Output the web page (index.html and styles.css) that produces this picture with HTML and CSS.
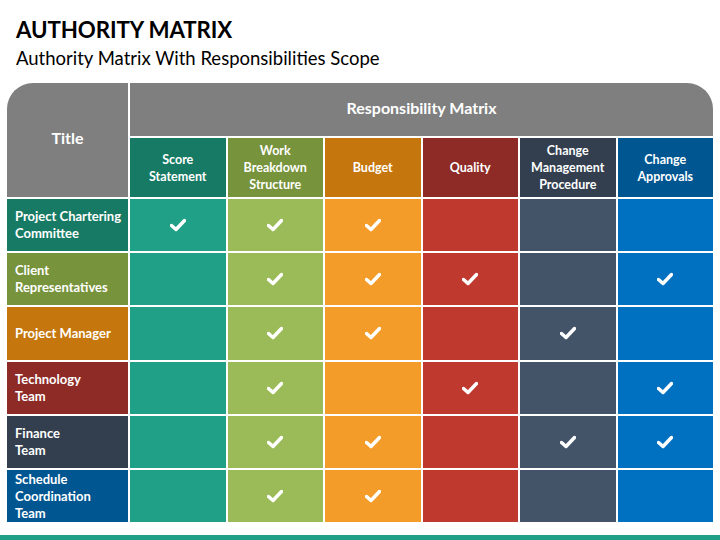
FILE: index.html
```html
<!DOCTYPE html>
<html>
<head>
<meta charset="utf-8">
<link rel="stylesheet" href="styles.css">
</head>
<body>
<div class="page">
  <h1 class="title">AUTHORITY MATRIX</h1>
  <p class="subtitle">Authority Matrix With Responsibilities Scope</p>
  <div class="matrix">
    <div class="corner">Title</div>
    <div class="band">Responsibility Matrix</div>
    <div class="sub c1h">Score<br>Statement</div>
    <div class="sub c2h">Work<br>Breakdown<br>Structure</div>
    <div class="sub c3h">Budget</div>
    <div class="sub c4h">Quality</div>
    <div class="sub c5h">Change<br>Management<br>Procedure</div>
    <div class="sub c6h">Change<br>Approvals</div>

    <div class="label c1h">Project Chartering<br>Committee</div>
    <div class="cell c1"><svg class="tick" viewBox="0 0 16 14"><path d="M1.5 7.5 L6 11.5 L14.5 2.5"/></svg></div>
    <div class="cell c2"><svg class="tick" viewBox="0 0 16 14"><path d="M1.5 7.5 L6 11.5 L14.5 2.5"/></svg></div>
    <div class="cell c3"><svg class="tick" viewBox="0 0 16 14"><path d="M1.5 7.5 L6 11.5 L14.5 2.5"/></svg></div>
    <div class="cell c4"></div>
    <div class="cell c5"></div>
    <div class="cell c6"></div>

    <div class="label c2h">Client<br>Representatives</div>
    <div class="cell c1"></div>
    <div class="cell c2"><svg class="tick" viewBox="0 0 16 14"><path d="M1.5 7.5 L6 11.5 L14.5 2.5"/></svg></div>
    <div class="cell c3"><svg class="tick" viewBox="0 0 16 14"><path d="M1.5 7.5 L6 11.5 L14.5 2.5"/></svg></div>
    <div class="cell c4"><svg class="tick" viewBox="0 0 16 14"><path d="M1.5 7.5 L6 11.5 L14.5 2.5"/></svg></div>
    <div class="cell c5"></div>
    <div class="cell c6"><svg class="tick" viewBox="0 0 16 14"><path d="M1.5 7.5 L6 11.5 L14.5 2.5"/></svg></div>

    <div class="label c3h">Project Manager</div>
    <div class="cell c1"></div>
    <div class="cell c2"><svg class="tick" viewBox="0 0 16 14"><path d="M1.5 7.5 L6 11.5 L14.5 2.5"/></svg></div>
    <div class="cell c3"><svg class="tick" viewBox="0 0 16 14"><path d="M1.5 7.5 L6 11.5 L14.5 2.5"/></svg></div>
    <div class="cell c4"></div>
    <div class="cell c5"><svg class="tick" viewBox="0 0 16 14"><path d="M1.5 7.5 L6 11.5 L14.5 2.5"/></svg></div>
    <div class="cell c6"></div>

    <div class="label c4h">Technology<br>Team</div>
    <div class="cell c1"></div>
    <div class="cell c2"><svg class="tick" viewBox="0 0 16 14"><path d="M1.5 7.5 L6 11.5 L14.5 2.5"/></svg></div>
    <div class="cell c3"></div>
    <div class="cell c4"><svg class="tick" viewBox="0 0 16 14"><path d="M1.5 7.5 L6 11.5 L14.5 2.5"/></svg></div>
    <div class="cell c5"></div>
    <div class="cell c6"><svg class="tick" viewBox="0 0 16 14"><path d="M1.5 7.5 L6 11.5 L14.5 2.5"/></svg></div>

    <div class="label c5h">Finance<br>Team</div>
    <div class="cell c1"></div>
    <div class="cell c2"><svg class="tick" viewBox="0 0 16 14"><path d="M1.5 7.5 L6 11.5 L14.5 2.5"/></svg></div>
    <div class="cell c3"><svg class="tick" viewBox="0 0 16 14"><path d="M1.5 7.5 L6 11.5 L14.5 2.5"/></svg></div>
    <div class="cell c4"></div>
    <div class="cell c5"><svg class="tick" viewBox="0 0 16 14"><path d="M1.5 7.5 L6 11.5 L14.5 2.5"/></svg></div>
    <div class="cell c6"><svg class="tick" viewBox="0 0 16 14"><path d="M1.5 7.5 L6 11.5 L14.5 2.5"/></svg></div>

    <div class="label c6h">Schedule<br>Coordination<br>Team</div>
    <div class="cell c1"></div>
    <div class="cell c2"><svg class="tick" viewBox="0 0 16 14"><path d="M1.5 7.5 L6 11.5 L14.5 2.5"/></svg></div>
    <div class="cell c3"><svg class="tick" viewBox="0 0 16 14"><path d="M1.5 7.5 L6 11.5 L14.5 2.5"/></svg></div>
    <div class="cell c4"></div>
    <div class="cell c5"></div>
    <div class="cell c6"></div>
  </div>
  <div class="footer-bar"></div>
</div>
</body>
</html>
```
FILE: styles.css
```css
* { box-sizing: border-box; }
html, body { margin: 0; padding: 0; background: #fff; }
body { font-family: "Lato", "Open Sans", sans-serif; width: 720px; height: 540px; overflow: hidden; }
.page { width: 720px; height: 540px; display: flex; flex-direction: column; }
.title { margin: 16px 0 0 16px; font-size: 22.3px; line-height: 28px; font-weight: 700; color: #000; letter-spacing: -0.1px; }
.subtitle { margin: 2px 0 0 16px; font-size: 18.5px; line-height: 24px; color: #000; font-weight: 400; }
.matrix {
  margin: 13px 7px 0 7px;
  display: grid;
  grid-template-columns: 121px repeat(6, 1fr);
  grid-template-rows: 53px 59px repeat(6, 52.2px);
  gap: 2px;
  color: #fff;
  font-weight: 700;
}
.corner { grid-row: span 2; background: #7f7f7f; border-top-left-radius: 26px; display: flex; align-items: center; justify-content: center; font-size: 16px; padding-bottom: 5px; }
.band { grid-column: span 6; background: #7f7f7f; border-top-right-radius: 26px; display: flex; align-items: center; justify-content: center; font-size: 16px; padding-bottom: 5px; }
.sub { display: flex; align-items: center; justify-content: center; text-align: center; font-size: 12.5px; line-height: 17px; }
.label { display: flex; align-items: center; padding-left: 8px; font-size: 13px; line-height: 17px; }
.cell { display: flex; align-items: center; justify-content: center; }
.tick { width: 16px; height: 14px; fill: none; stroke: #fff; stroke-width: 3.5; stroke-linecap: round; stroke-linejoin: round; }
.c1h { background: #177a64; }
.c2h { background: #77933c; }
.c3h { background: #c5770e; }
.c4h { background: #8e2b26; }
.c5h { background: #333f4f; }
.c6h { background: #005691; }
.c1 { background: #20a086; }
.c2 { background: #9bbb59; }
.c3 { background: #f39c2a; }
.c4 { background: #c0392f; }
.c5 { background: #435469; }
.c6 { background: #0070c0; }
.footer-bar { margin-top: auto; height: 5px; background: #20a086; }
```
